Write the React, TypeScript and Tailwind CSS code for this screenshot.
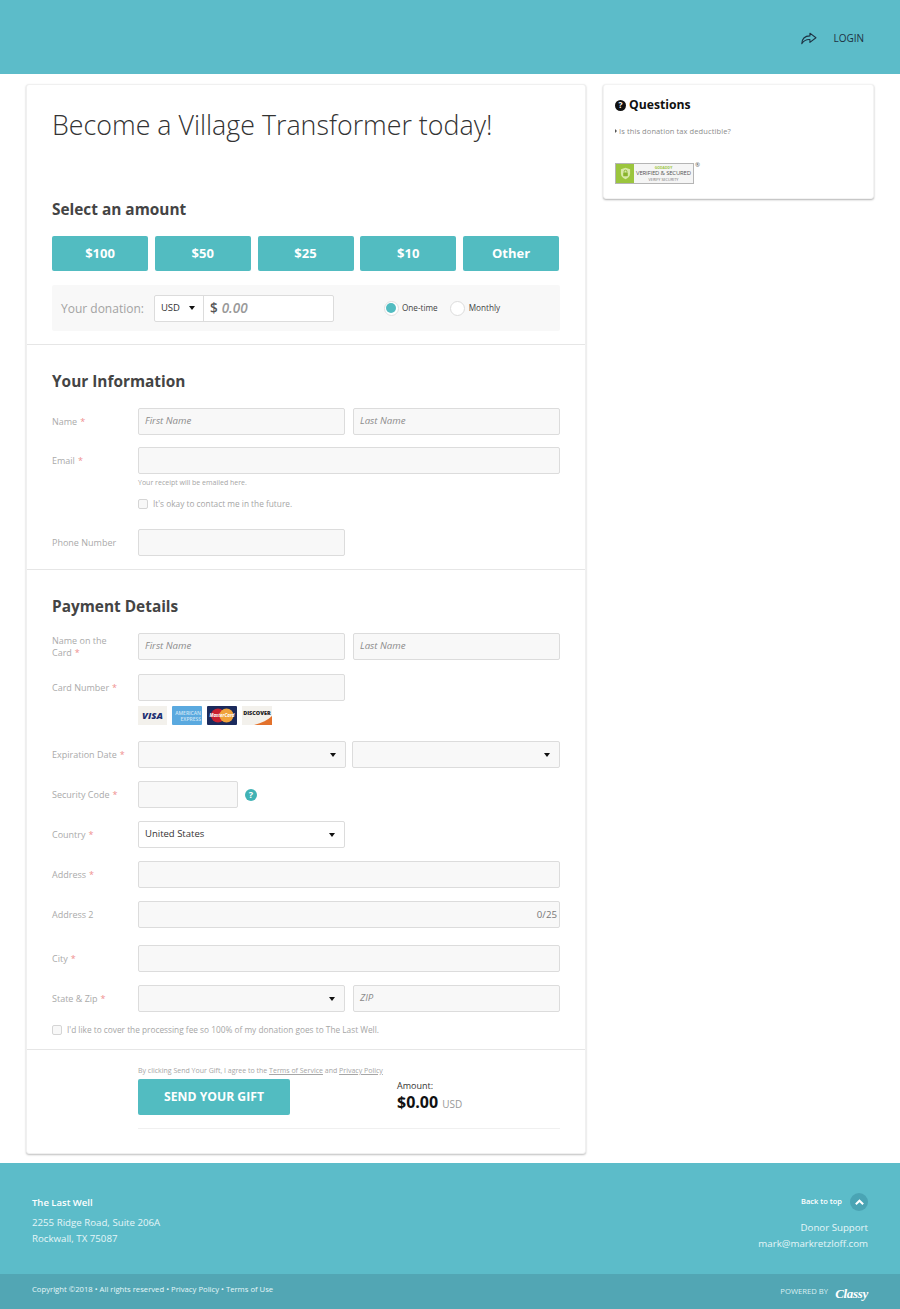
import React from 'react';

const inputBase = 'h-[27px] rounded-[2px] border border-[#dcdcdc] bg-[#f8f8f8] px-[6px] flex items-center text-[9.700px] italic text-[#8c8c8c]';

const Req = () => <span className="text-[#ef8f8f]">*</span>;

const Label: React.FC<{ text: string; first?: string; req?: boolean; className?: string }> = ({ text, first, req, className }) => (
  <div className={`w-[86px] shrink-0 pr-2 text-[9px] leading-[12px] text-[#aaaaaa] ${className || ''}`}>
    {first && <div>{first}</div>}
    <div className="flex gap-[3px]">
      <span>{text}</span>
      {req && <Req />}
    </div>
  </div>
);

const Caret = () => <span className="h-0 w-0 border-x-[3.500px] border-t-[4px] border-x-transparent border-t-[#111]" />;

const SelectBox: React.FC<{ className: string; value?: string; white?: boolean }> = ({ className, value, white }) => (
  <div className={`flex h-[27px] items-center justify-between rounded-[2px] border border-[#dcdcdc] pl-[6px] pr-[9px] text-[9.500px] text-[#333] ${white ? 'bg-white' : 'bg-[#f8f8f8]'} ${className}`}>
    <span>{value}</span>
    <Caret />
  </div>
);

const Checkbox = () => <span className="inline-block h-[10px] w-[10px] shrink-0 rounded-[2px] border border-[#d5d5d5] bg-[#f8f8f8]" />;

const CardIcons = () => (
  <div className="mt-[5px] flex gap-[5px]">
    <div className="flex h-[19px] w-[29px] items-center justify-center bg-[#f3f1ec] text-[9.500px] font-extrabold italic leading-none text-[#1d2f72]">VISA</div>
    <div className="flex h-[19px] w-[30px] flex-col items-end justify-center rounded-[1px] bg-[#5aa9df] pr-[1px] text-[5px] font-semibold leading-[6px] text-[#cfe6f6]">
      <span>AMERICAN</span>
      <span>EXPRESS</span>
    </div>
    <div className="relative h-[19px] w-[30px] overflow-hidden rounded-[1px] bg-[#1b2a5c]">
      <svg viewBox="0 0 30 19" className="absolute inset-0 h-full w-full">
        <circle cx="11" cy="9.500" r="7" fill="#c8202f" />
        <circle cx="19.500" cy="9.500" r="7" fill="#f0a23a" />
      </svg>
      <span className="absolute inset-x-0 top-[6px] text-center text-[4.500px] font-bold italic leading-[6px] text-white">MasterCard</span>
    </div>
    <div className="relative h-[19px] w-[30px] overflow-hidden bg-[#f3f1ec]">
      <span className="absolute inset-x-0 top-[4px] text-center text-[5.500px] font-extrabold leading-[6px] text-[#222]">DISCOVER</span>
      <svg viewBox="0 0 30 19" className="absolute inset-0 h-full w-full">
        <path d="M12 19 C20 17 26 14 30 10 V19 Z" fill="#e3722c" />
      </svg>
    </div>
  </div>
);

const GoDaddySeal = () => (
  <div className="mt-[26px] flex items-start">
    <div className="flex h-[21px] w-[79px] border border-[#b5b5b5] bg-[#f5f5f5]">
      <div className="flex w-[18px] items-center justify-center bg-[#9bc53d]">
        <svg viewBox="0 0 12 14" className="h-[13px] w-[11px]">
          <path d="M6 .8 11 2.400V7c0 3-2.200 5.200-5 6.200C3.200 12.200 1 10 1 7V2.400Z" fill="#d8e9a8" />
          <rect x="3.500" y="6" width="5" height="4" rx=".5" fill="#8ab42e" />
          <path d="M4.500 6V4.800a1.500 1.500 0 0 1 3 0V6" fill="none" stroke="#8ab42e" />
        </svg>
      </div>
      <div className="flex flex-1 flex-col items-center justify-center text-center leading-none">
        <span className="text-[3.500px] font-bold leading-[5px] text-[#9bc53d]">GODADDY</span>
        <span className="whitespace-nowrap text-[6px] font-normal leading-[7px] tracking-[-0.2px] text-[#555]">VERIFIED &amp; SECURED</span>
        <span className="text-[3.800px] leading-[5px] text-[#777]">VERIFY SECURITY</span>
      </div>
    </div>
    <span className="ml-[1px] mt-[-2px] text-[6px] leading-[8px] text-[#555]">®</span>
  </div>
);

const ClassyLogo = () => (
  <span className="text-[13px] font-bold italic leading-none tracking-[-0.3px] text-white" style={{ fontFamily: '"Liberation Serif", serif' }}>
    Classy
  </span>
);

export default function App() {
  return (
    <div className="flex min-h-[1309px] w-[900px] flex-col bg-white text-[#333]" style={{ fontFamily: '"Open Sans", sans-serif' }}>
      <header className="flex h-[74px] items-center justify-end bg-[#5cbcc9] pr-[36px] pt-[2px]">
        <svg viewBox="0 0 24 24" className="mr-[16px] h-[17px] w-[17px] text-[#1c3142]" fill="none" stroke="currentColor" strokeWidth="1.500" strokeLinejoin="round">
          <path d="M14 4.500 22.500 11 14 17.500v-4c-4.500-.3-8.500 1-11.500 6 .2-6.500 4-11 11.500-11.200Z" />
        </svg>
        <span className="text-[10px] font-normal text-[#1c3142]">LOGIN</span>
      </header>

      <main className="flex flex-1 items-start pl-[26px] pt-[10px]">
        {/* donation form */}
        <div className="h-[1070px] w-[560px] rounded-[3px] border border-[#f0f0f0] bg-white shadow-[0_1px_2px_rgba(0,0,0,0.25)]">
          <div className="h-[259px] px-[25px]">
            <h1 className="pt-[20px] text-[26.800px] font-light leading-[40px] text-[#333]">Become a Village Transformer today!</h1>
            <h2 className="mt-[54px] text-[15.400px] font-bold leading-[22px] text-[#444]">Select an amount</h2>
            <div className="mt-[15px] flex w-[507px] justify-between">
              {['$100', '$50', '$25', '$10', 'Other'].map((a) => (
                <div key={a} className="flex h-[35px] w-[96px] items-center justify-center rounded-[2px] bg-[#52bcc1] text-[13px] font-bold text-white">
                  {a}
                </div>
              ))}
            </div>
            <div className="mt-[14px] flex h-[46px] w-[508px] items-center rounded-[2px] bg-[#f8f8f8] pl-[9px]">
              <span className="pt-[1px] text-[12px] text-[#a3a3a3]">Your donation:</span>
              <div className="ml-[10px] flex h-[27px] w-[180px] rounded-[2px] border border-[#dcdcdc] bg-white">
                <div className="flex w-[49px] items-center justify-between border-r border-[#dcdcdc] pl-[6px] pr-[8px] text-[9.500px] text-[#333]">
                  USD <Caret />
                </div>
                <div className="flex items-center pl-[6px] text-[13.500px] font-semibold text-[#555]">
                  $<span className="ml-[4px] italic text-[#999]">0.00</span>
                </div>
              </div>
              <div className="ml-[50px] flex items-center">
                <span className="flex h-[15px] w-[15px] items-center justify-center rounded-full border border-[#e0e0e0] bg-white">
                  <span className="h-[10px] w-[10px] rounded-full bg-[#52bcc1]" />
                </span>
                <span className="ml-[3px] text-[8.200px] text-[#444]">One-time</span>
                <span className="ml-[12px] h-[15px] w-[15px] rounded-full border border-[#dcdcdc] bg-white" />
                <span className="ml-[4px] text-[8.200px] text-[#444]">Monthly</span>
              </div>
            </div>
          </div>

          <section className="h-[225px] border-t border-[#e6e6e6] px-[25px]">
            <h2 className="pt-[26px] text-[15.400px] font-bold leading-[22px] text-[#444]">Your Information</h2>
            <div className="mt-[15px] flex items-center">
              <Label text="Name" req />
              <div className={`${inputBase} w-[207px]`}>First Name</div>
              <div className={`${inputBase} ml-[8px] w-[207px]`}>Last Name</div>
            </div>
            <div className="mt-[12px] flex">
              <Label text="Email" req className="pt-[8px]" />
              <div className="w-[422px]">
                <div className={inputBase} />
                <div className="mt-[3px] text-[7px] leading-[12px] text-[#a6a6a6]">Your receipt will be emailed here.</div>
                <div className="mt-[9px] flex items-center">
                  <Checkbox />
                  <span className="ml-[5px] text-[8.300px] leading-[12px] text-[#a6a6a6]">It's okay to contact me in the future.</span>
                </div>
              </div>
            </div>
            <div className="mt-[19px] flex items-center">
              <Label text="Phone Number" />
              <div className={`${inputBase} w-[207px]`} />
            </div>
          </section>

          <section className="h-[480px] border-t border-[#e6e6e6] px-[25px]">
            <h2 className="pt-[26px] text-[15.400px] font-bold leading-[22px] text-[#444]">Payment Details</h2>
            <div className="mt-[15px] flex items-center">
              <Label first="Name on the" text="Card" req />
              <div className={`${inputBase} w-[207px]`}>First Name</div>
              <div className={`${inputBase} ml-[8px] w-[207px]`}>Last Name</div>
            </div>
            <div className="mt-[14px] flex">
              <Label text="Card Number" req className="pt-[8px]" />
              <div>
                <div className={`${inputBase} w-[207px]`} />
                <CardIcons />
              </div>
            </div>
            <div className="mt-[16px] flex items-center">
              <Label text="Expiration Date" req />
              <SelectBox className="w-[208px]" />
              <SelectBox className="ml-[6px] w-[208px]" />
            </div>
            <div className="mt-[13px] flex items-center">
              <Label text="Security Code" req />
              <div className={`${inputBase} w-[100px]`} />
              <span className="ml-[7px] flex h-[12px] w-[12px] items-center justify-center rounded-full bg-[#41b3b5] text-[9px] font-bold leading-none text-white">?</span>
            </div>
            <div className="mt-[13px] flex items-center">
              <Label text="Country" req />
              <SelectBox className="w-[207px]" value="United States" white />
            </div>
            <div className="mt-[13px] flex items-center">
              <Label text="Address" req />
              <div className={`${inputBase} w-[422px]`} />
            </div>
            <div className="mt-[13px] flex items-center">
              <Label text="Address 2" />
              <div className={`${inputBase} w-[422px] justify-end pr-[2px] pt-[2px] text-[7.300px] not-italic text-[#777]`}>0/25</div>
            </div>
            <div className="mt-[17px] flex items-center">
              <Label text="City" req />
              <div className={`${inputBase} w-[422px]`} />
            </div>
            <div className="mt-[13px] flex items-center">
              <Label text="State & Zip" req />
              <SelectBox className="w-[207px]" />
              <div className={`${inputBase} ml-[8px] w-[207px]`}>ZIP</div>
            </div>
            <div className="mt-[12px] flex items-center">
              <Checkbox />
              <span className="ml-[5px] text-[8.300px] leading-[12px] text-[#a6a6a6]">I'd like to cover the processing fee so 100% of my donation goes to The Last Well.</span>
            </div>
          </section>

          <section className="border-t border-[#e6e6e6] pl-[111px] pr-[25px]">
            <div className="pt-[16px] text-[7px] leading-[10px] text-[#a6a6a6]">
              By clicking Send Your Gift, I agree to the <span className="underline">Terms of Service</span> and <span className="underline">Privacy Policy</span>
            </div>
            <div className="mt-[3px] flex">
              <div className="flex h-[36px] w-[152px] items-center justify-center rounded-[2px] bg-[#52bcc1] text-[12.200px] font-bold text-white">SEND YOUR GIFT</div>
              <div className="ml-[107px] pt-[1px]">
                <div className="text-[9px] leading-[12px] text-[#333]">Amount:</div>
                <div className="mt-[-1px] flex items-baseline">
                  <span className="text-[16px] font-bold leading-[22px] text-[#111]">$0.00</span>
                  <span className="ml-[4px] text-[10px] text-[#999]">USD</span>
                </div>
              </div>
            </div>
            <div className="mt-[13px] border-t border-[#f0f0f0]" />
          </section>
        </div>

        {/* questions */}
        <aside className="ml-[17px] h-[115px] w-[271px] rounded-[3px] border border-[#f3f3f3] bg-white px-[11px] shadow-[0_1px_2px_rgba(0,0,0,0.3)]">
          <div className="flex items-center pt-[11px]">
            <span className="flex h-[11px] w-[11px] items-center justify-center rounded-full bg-[#111] text-[8.500px] font-bold leading-none text-white">?</span>
            <span className="ml-[3px] text-[12.200px] font-bold leading-[18px] text-[#111]">Questions</span>
          </div>
          <div className="mt-[11px] flex items-center text-[7.500px] leading-[12px] tracking-[0.1px] text-[#8c8c8c]">
            <span className="mr-[2px] h-0 w-0 border-y-[2.500px] border-l-[2.500px] border-y-transparent border-l-[#555]" />
            Is this donation tax deductible?
          </div>
          <GoDaddySeal />
        </aside>
      </main>

      <footer className="bg-[#5cbcc9] text-white">
        <div className="flex h-[111px] justify-between pl-[32px] pr-[32px]">
          <div className="pt-[32px]">
            <div className="text-[9.500px] font-semibold leading-[15px]">The Last Well</div>
            <div className="mt-[5px] text-[9.700px] leading-[15.500px] text-[#e6f6f8]">
              2255 Ridge Road, Suite 206A
              <br />
              Rockwall, TX 75087
            </div>
          </div>
          <div className="pt-[30px] text-right">
            <div className="flex items-center justify-end">
              <span className="text-[7.500px] font-semibold">Back to top</span>
              <span className="ml-[8px] flex h-[18px] w-[18px] items-center justify-center rounded-full bg-[#4aa4b4]">
                <svg viewBox="0 0 12 12" className="h-[11px] w-[11px]" fill="none" stroke="white" strokeWidth="2.200">
                  <path d="M2 8 6 4l4 4" />
                </svg>
              </span>
            </div>
            <div className="mt-[9px] text-[9.700px] leading-[15.500px] text-[#e6f6f8]">
              Donor Support
              <br />
              mark@markretzloff.com
            </div>
          </div>
        </div>
        <div className="flex h-[35px] items-center justify-between bg-[#52a6b4] pb-[3px] pl-[32px] pr-[32px]">
          <span className="text-[7.700px] text-[#e6f6f8]">Copyright ©2018 • All rights reserved • Privacy Policy • Terms of Use</span>
          <div className="flex items-center pt-[4px]">
            <span className="text-[7.700px] text-[#d9f0f3]">POWERED BY</span>
            <span className="ml-[7px]"><ClassyLogo /></span>
          </div>
        </div>
      </footer>
    </div>
  );
}
